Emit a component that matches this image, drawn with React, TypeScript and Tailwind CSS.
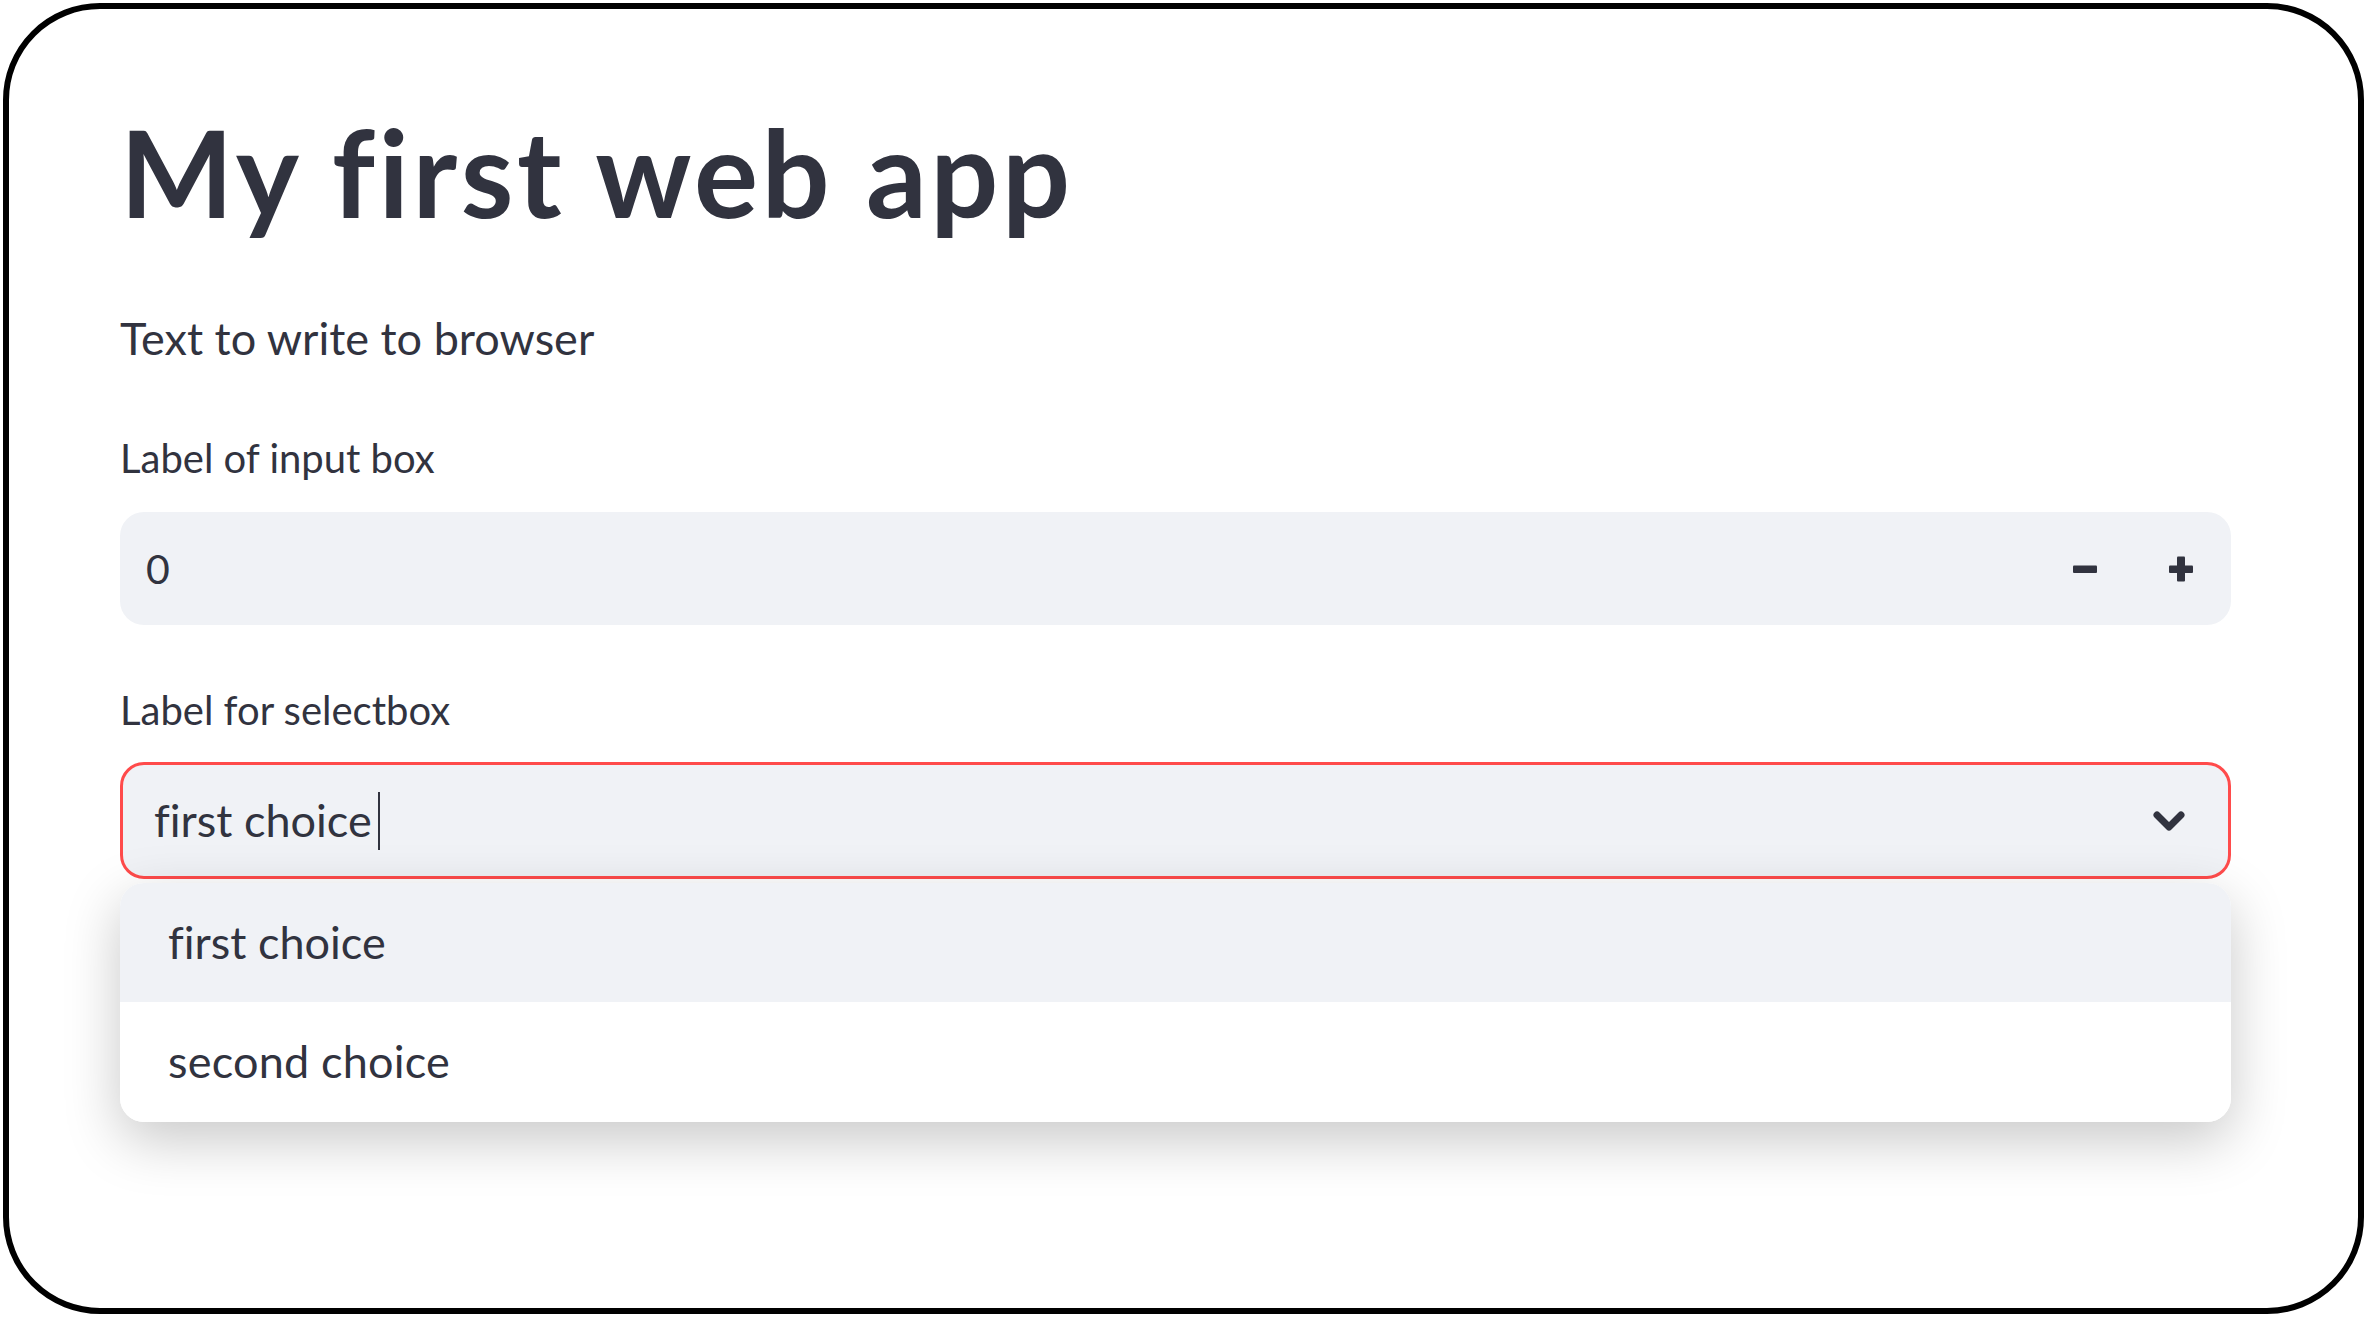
import { useState } from "react";

const options = ["first choice", "second choice"];

const MinusIcon = () => (
  <svg width="26" height="26" viewBox="0 0 26 26">
    <rect x="1" y="9.5" width="24" height="7.5" rx="1" fill="#31333F" />
  </svg>
);

const PlusIcon = () => (
  <svg width="26" height="26" viewBox="0 0 26 26">
    <rect x="1" y="9.5" width="24" height="7.5" rx="1" fill="#31333F" />
    <rect x="9" y="0.5" width="8" height="25" rx="1" fill="#31333F" />
  </svg>
);

const Chevron = () => (
  <svg width="60" height="60" viewBox="0 0 60 60">
    <polyline
      points="18,24 30,36 42,24"
      fill="none"
      stroke="#31333F"
      strokeWidth="7"
      strokeLinecap="round"
      strokeLinejoin="round"
    />
  </svg>
);

const NumberInput = ({ value }: { value: number }) => (
  <div className="mt-[30px] flex h-[113px] items-center rounded-[24px] bg-[#F0F2F6]">
    <span className="flex-1 pl-[26px] text-[41px] leading-none">{value}</span>
    <div className="flex h-full pr-[2px]">
      <button className="flex w-[96px] items-center justify-center">
        <MinusIcon />
      </button>
      <button className="flex w-[96px] items-center justify-center">
        <PlusIcon />
      </button>
    </div>
  </div>
);

const SelectBox = ({ value }: { value: string }) => (
  <div className="relative mt-[28px]">
    <div className="flex h-[117px] items-center rounded-[24px] border-[3px] border-[#FF4B4B] bg-[#F0F2F6] pl-[31px] pr-[29px]">
      <span className="text-[45px] leading-none">{value}</span>
      <span className="ml-[6px] h-[58px] w-[2px] bg-[#31333F]" />
      <span className="flex-1" />
      <Chevron />
    </div>

    {/* open menu */}
    <div className="absolute left-0 right-0 top-[121px] overflow-hidden rounded-[24px] bg-white shadow-[0_18px_56px_rgba(0,0,0,0.22)]">
      {options.map((opt, i) => (
        <div
          key={opt}
          className={
            i === 0
              ? "flex h-[119px] items-center bg-[#F0F2F6] pl-[48px] text-[45px]"
              : "flex h-[120px] items-center bg-white pl-[48px] text-[45px] tracking-[0.2px]"
          }
        >
          {opt}
        </div>
      ))}
    </div>
  </div>
);

export default function App() {
  const [count] = useState(0);

  return (
    <div className="h-[1317px] w-[2367px] bg-white p-[3px]">
      <div className="h-full w-full rounded-[97px] border-[6px] border-black bg-white pl-[111px] pt-[91px]">
        <div className="flex w-[2111px] flex-col font-['Lato','Noto_Sans',sans-serif] text-[#31333F] [font-variant-ligatures:none]">
          <h1 className="h-[144px] text-[120px] font-bold leading-[144px] tracking-[3.5px]">My first web app</h1>
          <p className="mt-[67px] h-[54px] text-[45px] leading-[54px]">Text to write to browser</p>
          <label className="mt-[69px] h-[48px] text-[40px] leading-[48px]">Label of input box</label>
          <NumberInput value={count} />
          <label className="mt-[61px] h-[48px] text-[40px] leading-[48px]">Label for selectbox</label>
          <SelectBox value={options[0]} />
        </div>
      </div>
    </div>
  );
}
